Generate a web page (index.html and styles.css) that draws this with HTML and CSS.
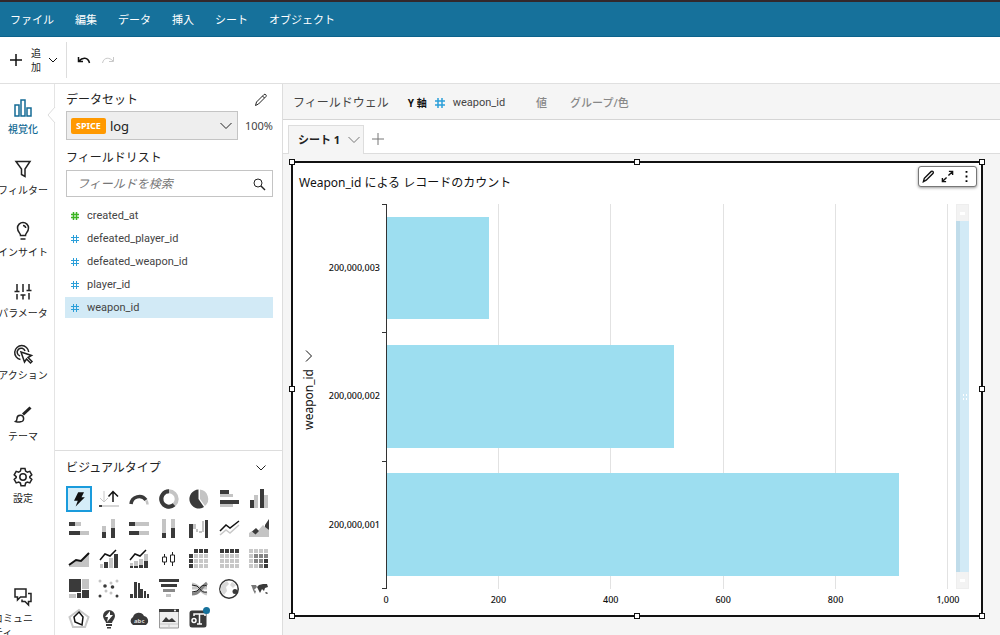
FILE: index.html
```html
<!DOCTYPE html>
<html lang="ja">
<head>
<meta charset="utf-8">
<meta name="viewport" content="width=device-width, initial-scale=1">
<title>分析</title>
<link rel="stylesheet" href="styles.css">
</head>
<body>
<nav class="menubar">
  <button>ファイル</button><button>編集</button><button>データ</button><button>挿入</button><button>シート</button><button>オブジェクト</button>
</nav>

<div class="toolbar">
  <button class="add">
    <svg width="14" height="14" viewBox="0 0 14 14"><path d="M7 1v12M1 7h12" class="k w15"/></svg>
    <span class="add-label">追加</span>
    <svg width="10" height="10" viewBox="0 0 10 10"><path d="M1 3l4 4 4-4" class="k"/></svg>
  </button>
  <button class="tool" aria-label="元に戻す"><svg width="14" height="10" viewBox="0 0 14 10"><path d="M1.500 2v4.500h4.500M2 6C5 2.500 11 1.500 12.500 8" class="k w15"/></svg></button>
  <button class="tool" aria-label="やり直す" disabled><svg width="14" height="10" viewBox="0 0 14 10"><path d="M12.500 2v4.500H8M12 6C9 2.500 3 1.500 1.500 8" class="line pale"/></svg></button>
</div>

<div class="workspace">
  <nav class="rail">
    <div class="rail-main">
      <button class="rail-item active"><svg width="20" height="20" viewBox="0 0 20 20"><path d="M2 7h4v11H2zM8 2h4v16H8zM14 10h4v8h-4z" class="line w15"/></svg><span>視覚化</span></button>
      <button class="rail-item"><svg width="20" height="20" viewBox="0 0 20 20"><path d="M3 2.500h14L12 10v7.500l-3.500-2V10z" class="line w15"/></svg><span>フィルター</span></button>
      <button class="rail-item"><svg width="20" height="20" viewBox="0 0 20 20"><path d="M7.500 14.500C7.500 12 4.500 11 4.500 7a5.500 5.500 0 0 1 11 0c0 4-3 5-3 7.500zM7.500 18h5M10 4.500q2.500.3 2.700 2.500" class="line w15"/></svg><span>インサイト</span></button>
      <button class="rail-item"><svg width="20" height="20" viewBox="0 0 20 20"><path d="M4 2v7M1.500 9.500h5M4 12v5.500M10 2v8M7.500 13h5M10 13v4.500M16 2v6M13.500 8.500h5M16 11v6.500" class="line w15"/></svg><span>パラメータ</span></button>
      <button class="rail-item"><svg width="20" height="20" viewBox="0 0 20 20"><path d="M7.500 15.500A7 7 0 1 1 15.700 8M7 12a4 4 0 1 1 5-5" class="line w15"/><path d="M8 8l10.500 3.500-3.500 2 4 4-1.500 1.500-4-4-2 3z" class="line w15"/></svg><span>アクション</span></button>
      <button class="rail-item"><svg width="20" height="20" viewBox="0 0 20 20"><path d="M17.500 2.500L10 9.500" class="line w3"/><path d="M2.500 16.500q1.500-1 1.500-3a3.300 3.300 0 1 1 3.500 3.300q-2 .7-5-.3z" class="line w15"/></svg><span>テーマ</span></button>
      <button class="rail-item"><svg width="20" height="20" viewBox="0 0 20 20"><path d="M8 1.500h4l.6 2.600 1.700 1 2.500-.8 2 3.500-2 1.800v1l2 1.800-2 3.500-2.500-.8-1.700 1-.6 2.600H8l-.6-2.600-1.700-1-2.500.8-2-3.500 2-1.800v-1l-2-1.800 2-3.500 2.500.8 1.700-1z" class="line w15"/><circle cx="10" cy="10" r="3.200" class="line w15"/></svg><span>設定</span></button>
    </div>
    <button class="rail-item community"><svg width="20" height="20" viewBox="0 0 20 20"><path d="M2 2h11v8H7.500L4.500 13v-3H2zM15 6.500h3v8h-2.500v3.500l-3.500-3.500H9v-2" class="line w15"/></svg><span>コミュニティ</span></button>
  </nav>

  <aside class="panel">
    <svg class="pointer" width="8" height="16" viewBox="0 0 8 16"><path d="M8 0L1 8l7 8" fill="#fff" stroke="#ddd"/></svg>
    <section class="data">
      <div class="heading"><h2>データセット</h2><button aria-label="データセットを編集"><svg width="14" height="14" viewBox="0 0 14 14"><path d="M1.500 12.500l1-3.500 7.500-7.500q1-.6 1.800.2t.2 1.800L4.500 11zM8.500 3l2 2" class="line"/></svg></button></div>
      <div class="dataset-row">
        <button class="dataset"><b>SPICE</b><span>log</span><svg width="14" height="10" viewBox="0 0 14 10"><path d="M1.500 2L7 7.500 12.500 2" class="line"/></svg></button>
        <span class="percent">100%</span>
      </div>
      <h2 class="fields-title"><label for="search">フィールドリスト</label></h2>
      <div class="search"><input id="search" type="text" placeholder="フィールドを検索"><svg width="14" height="14" viewBox="0 0 14 14"><circle cx="6" cy="6" r="4" class="line"/><path d="M9 9l4 4" class="line w15"/></svg></div>
      <ul class="fields">
        <li class="green"><svg width="8" height="8" viewBox="0 0 8 8"><path d="M2.500 0v8M5.500 0v8M0 2.500h8M0 5.500h8" class="line w15"/></svg><span>created_at</span></li>
        <li><svg width="8" height="8" viewBox="0 0 8 8"><path d="M2.500 0v8M5.500 0v8M0 2.500h8M0 5.500h8" class="line"/></svg><span>defeated_player_id</span></li>
        <li><svg width="8" height="8" viewBox="0 0 8 8"><path d="M2.500 0v8M5.500 0v8M0 2.500h8M0 5.500h8" class="line"/></svg><span>defeated_weapon_id</span></li>
        <li><svg width="8" height="8" viewBox="0 0 8 8"><path d="M2.500 0v8M5.500 0v8M0 2.500h8M0 5.500h8" class="line"/></svg><span>player_id</span></li>
        <li class="selected"><svg width="8" height="8" viewBox="0 0 8 8"><path d="M2.500 0v8M5.500 0v8M0 2.500h8M0 5.500h8" class="line"/></svg><span>weapon_id</span></li>
      </ul>
    </section>
    <section class="types">
      <div class="heading"><h2>ビジュアルタイプ</h2><button aria-label="折りたたむ"><svg width="12" height="10" viewBox="0 0 12 10"><path d="M1.500 2.500L6 7l4.500-4.500" class="line"/></svg></button></div>
      <div class="type-grid">
        <button class="chosen" aria-label="自動グラフ"><svg viewBox="0 0 24 24"><path d="M11 4h7l-3 6h4L8 21l2.500-7H6z" fill="#111"/></svg></button>
        <button aria-label="KPI"><svg viewBox="0 0 24 24"><path d="M7 4v11M3 11l4 4 4-4" class="line pale"/><path d="M16 15V5M11.500 9.500L16 4.500l5 5" class="k w15"/><path d="M3 19h19" class="line pale w15"/><path d="M2 19h3" class="k w15"/></svg></button>
        <button aria-label="ゲージ"><svg viewBox="0 0 24 24"><path d="M4 17a8.300 8.300 0 0 1 15-4" fill="none" stroke="#3a3a3a" stroke-width="3.500"/><path d="M19.300 13.500q1 1.500 1.200 4" fill="none" stroke="#c4c4c4" stroke-width="2.500"/></svg></button>
        <button aria-label="ドーナツ"><svg viewBox="0 0 24 24"><circle cx="12" cy="12" r="7.700" fill="none" stroke="#c4c4c4" stroke-width="4"/><path d="M12 4.300a7.700 7.700 0 1 0 5 13.500" fill="none" stroke="#3a3a3a" stroke-width="4"/></svg></button>
        <button aria-label="円"><svg viewBox="0 0 24 24"><path d="M11.500 2.500v9.500l5.500 8A9.500 9.500 0 1 1 11.500 2.500z" class="ink"/><path d="M13 2.500a9.500 9.500 0 0 1 5 16.500L13 12z" class="gray"/></svg></button>
        <button aria-label="横棒"><svg viewBox="0 0 24 24"><path d="M3 3h9v4H3zM3 13h19v4H3z" class="ink"/><path d="M3 7h13v3H3zM3 17h13v3H3z" class="gray"/></svg></button>
        <button aria-label="縦棒"><svg viewBox="0 0 24 24"><path d="M3 13h4v8H3zM13 2h4v19h-4z" class="ink"/><path d="M7 8h4v13H7zM17 8h4v13h-4z" class="gray"/></svg></button>

        <button aria-label="積み上げ横棒"><svg viewBox="0 0 24 24"><path d="M2 5h6v4H2zM2 14h11v4H2z" class="ink"/><path d="M8 5h6v4H8zM13 14h9v4h-9z" class="gray"/></svg></button>
        <button aria-label="積み上げ縦棒"><svg viewBox="0 0 24 24"><path d="M5 15h4v6H5zM14 11h4v10h-4z" class="ink"/><path d="M5 9h4v6H5zM14 2h4v9h-4z" class="gray"/></svg></button>
        <button aria-label="100%積み上げ横棒"><svg viewBox="0 0 24 24"><path d="M2 5h6v4H2zM2 14h10v4H2z" class="ink"/><path d="M8 5h14v4H8zM12 14h10v4H12z" class="gray"/></svg></button>
        <button aria-label="100%積み上げ縦棒"><svg viewBox="0 0 24 24"><path d="M5 16h4v5H5zM14 11h4v10h-4z" class="ink"/><path d="M5 2h4v14H5zM14 2h4v9h-4z" class="gray"/></svg></button>
        <button aria-label="ウォーターフォール"><svg viewBox="0 0 24 24"><path d="M2 7h4v14H2zM18 3h3v18h-3z" class="ink"/><path d="M6 7h3v5H6zM9 12h2v3H9zM12 14h3v2h-3zM15 4h2v11h-2z" class="gray"/></svg></button>
        <button aria-label="折れ線"><svg viewBox="0 0 24 24"><path d="M3 18l6-5 4 3 9-8" class="line pale w15"/><path d="M3 14l6-6 4 3 9-7" class="k w15"/></svg></button>
        <button aria-label="面"><svg viewBox="0 0 24 24"><path d="M2 20v-4l3-2 4 2 7-8 6 5v7z" class="gray"/><path d="M5 14.500l4-3.500 3 3-3.500 3.500zM18 8l4-6v11l-4-3z" class="ink"/></svg></button>

        <button aria-label="積み上げ面"><svg viewBox="0 0 24 24"><path d="M2 20v-2l7-5 5 1 8-8v14z" class="gray"/><path d="M2 18l7-5 5 1 8-8" class="k w2"/></svg></button>
        <button aria-label="複合"><svg viewBox="0 0 24 24"><path d="M7 15h4v6H7zM17 7h4v14h-4z" class="ink"/><path d="M3 17h3v4H3zM12 11h4v10h-4z" class="gray"/><path d="M3 13l5-6 5 2 6-6" class="k w15"/></svg></button>
        <button aria-label="積み上げ複合"><svg viewBox="0 0 24 24"><path d="M3 16h3v3H3zM7 14h4v5H7zM12 12h4v6h-4zM17 7h4v8h-4z" class="gray"/><path d="M3 19h3v2H3zM7 19h4v2H7zM12 18h4v3h-4zM17 14h4v7h-4z" class="ink"/><path d="M3 13l5-6 5 2 6-6" class="k w15"/></svg></button>
        <button aria-label="箱ひげ"><svg viewBox="0 0 24 24"><path d="M7.500 7v3M5.500 10h4v5h-4zM7.500 15v3M15.500 5v3M13.500 8h4v7h-4zM15.500 15v4" class="line"/></svg></button>
        <button aria-label="ピボット"><svg viewBox="0 0 24 24"><path d="M7 4h14M4 7v14" class="dots"/><path d="M7 9h14M7 14h14M7 19h14" class="dots light"/></svg></button>
        <button aria-label="表"><svg viewBox="0 0 24 24"><path d="M3 4h19" class="dots"/><path d="M3 9h19M3 14h19M3 19h19" class="dots light"/></svg></button>
        <button aria-label="ヒートマップ"><svg viewBox="0 0 24 24"><path d="M2 4h19M2 9h19M2 14h19M2 19h19" class="dots light"/><path d="M7 9h14M7 14h14M12 19h9" class="dots mid"/><path d="M17 14h4M17 19h4" class="dots"/></svg></button>

        <button aria-label="ツリーマップ"><svg viewBox="0 0 24 24"><path d="M2 2h12v13H2zM10 16h4v5h-4zM15 13h7v8h-7z" class="ink"/><path d="M15 2h7v10h-7zM2 17h7v4H2z" class="gray"/></svg></button>
        <button aria-label="散布図"><svg viewBox="0 0 24 24"><g class="ink"><circle cx="3" cy="19" r="1.500"/><circle cx="8" cy="9" r="1.800"/><circle cx="15.500" cy="10" r="1.800"/><circle cx="20" cy="19" r="1.500"/></g><g class="gray"><circle cx="3" cy="4" r="1.500"/><circle cx="14" cy="6" r="1.500"/><circle cx="20" cy="4" r="1.500"/><circle cx="9" cy="14" r="1.500"/><circle cx="14" cy="16" r="1.500"/></g></svg></button>
        <button aria-label="ヒストグラム"><svg viewBox="0 0 24 24"><path d="M3 17h3v4H3zM7 5h3v16H7zM11 6h2v15h-2zM13 12h3v9h-3zM17 14h2v7h-2zM20 17h2v4h-2z" class="ink"/></svg></button>
        <button aria-label="ファネル"><svg viewBox="0 0 24 24"><path d="M2 2h20v3H2zM4 7h16v3H4z" class="ink"/><path d="M6 12h12v3H6z" fill="#8a8a8a"/><path d="M9 17h5v3H9z" class="gray"/></svg></button>
        <button aria-label="サンキー"><svg viewBox="0 0 24 24"><path d="M5 7q5 1 8 5t7 5M5 11h15" fill="none" stroke="#c4c4c4" stroke-width="3"/><path d="M5 17q5 0 8-4t7-7" fill="none" stroke="#858585" stroke-width="3"/><path d="M5 8q6 0 8 4t7 3M5 15q6 0 8-4t7-2" class="line"/></svg></button>
        <button aria-label="ポイントマップ"><svg viewBox="0 0 24 24"><circle cx="12" cy="12" r="9.200" fill="#fff" stroke="#333" stroke-width="1.500"/><path d="M5 7l5-3 2 3-3 3 1 4-3 4-4-5zM15 5l4 3-3 3-3-3z" fill="#d8d8d8"/><circle cx="18" cy="14.500" r="2.500" class="ink"/></svg></button>
        <button aria-label="塗り分けマップ"><svg viewBox="0 0 24 24"><path d="M4 8h5l1 2-3 3 2 1-1 3-2-4-1-3z" fill="#777"/><path d="M12 8l4-1h4l1 3-3 1-1 3-2-2-2 4-2-4-1-2zM19 15l2 1-1 1-2-1z" class="ink"/></svg></button>

        <button aria-label="レーダー"><svg viewBox="0 0 24 24"><path d="M12 3l9.500 7-3.500 10H6L2.500 10z" class="line pale w2"/><path d="M12 5l4 5-1 8-7-3-1-5z" class="k w15"/></svg></button>
        <button aria-label="インサイト"><svg viewBox="0 0 24 24"><path d="M9 16c0-2-3-4-3-7a6 6 0 0 1 12 0c0 3-3 5-3 7zM9 17h6v2H9zM10 20h4v1.500h-4z" class="ink"/><path d="M13 4l-5 6h3l-1 5 6-7h-3z" fill="#fff"/></svg></button>
        <button aria-label="ワードクラウド"><svg viewBox="0 0 24 24"><path d="M6 18a4.500 4.500 0 0 1 0-8 6 6 0 0 1 11-1 5 5 0 0 1 2 9z" class="ink"/><text x="7" y="16" class="abc">abc</text></svg></button>
        <button aria-label="カスタムコンテンツ"><svg viewBox="0 0 24 24"><path d="M2.500 3h19v18h-19z" fill="#eee" stroke="#999"/><path d="M2 2h20v3H2z" class="ink"/><path d="M5 15l4-5 3 3 3-2 4 4z" class="ink"/><path d="M3 17h18M12 17v4" class="line pale"/><circle cx="18" cy="3.500" r="1" fill="#fff"/></svg></button>
        <button class="fresh" aria-label="テキストボックス"><svg viewBox="0 0 24 24"><rect x="2.500" y="3.500" width="17" height="17" rx="2.500" class="ink"/><path d="M7 9V7h11v2M12.500 7v10M10 17h5" fill="none" stroke="#fff" stroke-width="1.500"/><circle cx="7" cy="13.500" r="2" fill="none" stroke="#fff" stroke-width="1.500"/></svg></button>
      </div>
    </section>
  </aside>

  <main class="content">
    <div class="wells">
      <h2>フィールドウェル</h2>
      <div class="axis-well"><b>Y 軸</b><svg width="10" height="10" viewBox="0 0 10 10"><path d="M3 0v10M7 0v10M0 3h10M0 7h10" class="line w15"/></svg><span>weapon_id</span></div>
      <span class="empty">値</span><span class="empty">グループ/色</span>
    </div>
    <div class="tabs">
      <button class="tab">シート 1<svg width="14" height="10" viewBox="0 0 14 10"><path d="M1.500 2L7 7.500 12.500 2" class="line"/></svg></button>
      <button class="new-tab" aria-label="シートを追加"><svg width="14" height="14" viewBox="0 0 14 14"><path d="M7 1v12M1 7h12" class="line"/></svg></button>
    </div>
    <div class="sheet">
      <article class="visual">
        <i class="handle n w"></i><i class="handle n c"></i><i class="handle n e"></i><i class="handle m w"></i><i class="handle m e"></i><i class="handle s w"></i><i class="handle s c"></i><i class="handle s e"></i>
        <div class="visual-tools">
          <button aria-label="編集"><svg width="14" height="14" viewBox="0 0 14 14"><path d="M1.500 12.500l1-3.500 7.500-7.500q1-.6 1.800.2t.2 1.800L4.500 11z" class="k w15"/></svg></button>
          <button aria-label="最大化"><svg width="14" height="14" viewBox="0 0 14 14"><path d="M8.500 1.500h4v4M12.500 1.500L8 6M5.500 12.500h-4v-4M1.500 12.500L6 8" class="k w15"/></svg></button>
          <button aria-label="メニュー"><svg width="14" height="14" viewBox="0 0 14 14"><path d="M6 1h2v2H6zM6 6h2v2H6zM6 11h2v2H6z"/></svg></button>
        </div>
        <h1>Weapon_id による レコードのカウント</h1>
        <div class="chart">
          <div class="axis-title"><svg width="10" height="14" viewBox="0 0 10 14"><path d="M2 1.500L7.500 7 2 12.500" class="line"/></svg><span>weapon_id</span></div>
          <div class="categories"><span>200,000,003</span><span>200,000,002</span><span>200,000,001</span></div>
          <div class="plot">
            <div class="band"><div class="bar" style="width:18.2%"></div></div>
            <div class="band"><div class="bar" style="width:51.2%"></div></div>
            <div class="band"><div class="bar" style="width:91.3%"></div></div>
          </div>
          <div class="scroller">
            <div class="cap"><svg width="5" height="3" viewBox="0 0 5 3"><path d="M0 0h5v3H0z" fill="#fff"/></svg></div>
            <div class="thumb"><svg width="4" height="6" viewBox="0 0 4 6"><path d="M0 0h1v2H0zM3 0h1v2H3zM0 4h1v2H0zM3 4h1v2H3z" fill="#fff"/></svg></div>
            <div class="cap"><svg width="5" height="3" viewBox="0 0 5 3"><path d="M0 0h5v3H0z" fill="#fff"/></svg></div>
          </div>
          <div class="values"><span>0</span><span>200</span><span>400</span><span>600</span><span>800</span><span>1,000</span></div>
        </div>
      </article>
    </div>
  </main>
</div>
</body>
</html>
```
FILE: styles.css
```css
* { box-sizing: border-box; }
body {
  margin: 0;
  height: 100vh;
  display: flex;
  flex-direction: column;
  overflow: hidden;
  background: #fff;
  color: #222;
  font: 12px/16px "Noto Sans", "Noto Sans CJK JP", sans-serif;
}
button { padding: 0; border: 0; background: none; color: inherit; font: inherit; }
h1, h2 { margin: 0; font-size: 12px; font-weight: 400; }
svg { display: block; flex: none; overflow: visible; }
.line, .k { fill: none; stroke: currentColor; stroke-width: 1; }
.k { stroke: #111; }
.w15 { stroke-width: 1.5; }
.w2 { stroke-width: 2; }
.w3 { stroke-width: 3; }
.pale { stroke: #c8c8c8; }
.ink { fill: #3a3a3a; }
.gray { fill: #c4c4c4; }
.dots { fill: none; stroke: #3a3a3a; stroke-width: 4; stroke-dasharray: 4 1; }
.dots.light { stroke: #c8c8c8; }
.dots.mid { stroke: #858585; }
.abc { font: 700 6px "Noto Sans", sans-serif; fill: #ddd; }

.menubar {
  flex: none;
  display: flex;
  align-items: center;
  gap: 21px;
  height: 37px;
  padding: 2px 0 0 10px;
  border-top: 2px solid #33282c;
  border-bottom: 1px solid #0c628b;
  background: #16719b;
  color: #fff;
  font-size: 11px;
}
.toolbar {
  flex: none;
  display: flex;
  align-items: center;
  gap: 10px;
  height: 47px;
  border-bottom: 1px solid #e0e0e0;
}
.add {
  display: flex;
  align-items: center;
  gap: 5px;
  height: 36px;
  padding: 0 8px 0 9px;
  border-right: 1px solid #ddd;
}
.add-label { width: 14px; margin-left: 1px; font-size: 10px; line-height: 14px; }
.workspace { flex: 1; min-height: 0; display: flex; }

.rail {
  flex: none;
  display: flex;
  flex-direction: column;
  justify-content: space-between;
  width: 55px;
  padding: 14px 8px 0 0;
  border-right: 1px solid #e4e4e4;
  overflow: hidden;
}
.rail-main { display: grid; grid-template-columns: 100%; grid-auto-rows: 1fr; height: 430px; }
.rail-item {
  display: flex;
  flex-direction: column;
  align-items: center;
  gap: 3px;
  font-size: 10px;
  line-height: 16px;
  white-space: nowrap;
}
.rail-item.active { color: #146b95; font-weight: 500; }
.rail-item.community { justify-content: flex-start; gap: 4px; height: 48px; line-height: 14px; }
.community span { width: 60px; padding-right: 18px; text-align: left; white-space: normal; }

.panel {
  position: relative;
  flex: none;
  display: flex;
  flex-direction: column;
  width: 228px;
  border-right: 1px solid #ddd;
}
.pointer { position: absolute; top: 23px; left: -8px; }
.data { flex: 1; padding: 8px 9px 0 11px; }
.heading { display: flex; justify-content: space-between; align-items: center; padding-right: 5px; }
.dataset-row { display: flex; align-items: center; gap: 7px; margin-top: 3px; }
.dataset {
  flex: 1;
  display: flex;
  align-items: center;
  gap: 4px;
  height: 29px;
  padding: 0 4px;
  border: 1px solid #c4c4c4;
  background: #eee;
}
.dataset b { padding: 0 5px; border-radius: 2px; background: #ff9900; color: #fff; font-size: 9px; }
.dataset span { flex: 1; text-align: left; font-size: 13px; }
.percent { font-size: 11px; color: #444; }
.fields-title { margin: 10px 0 4px; }
.search {
  display: flex;
  align-items: center;
  height: 27px;
  padding: 0 6px 0 10px;
  border: 1px solid #c4c4c4;
}
.search input { flex: 1; min-width: 0; padding: 0; border: 0; outline: 0; font: inherit; }
.search input::placeholder { color: #777; font-style: italic; }
.fields {
  display: grid;
  gap: 2px;
  margin: 8px 0 0 -1px;
  padding: 0;
  list-style: none;
  color: #444;
  font: 11px/16px Roboto, sans-serif;
}
.fields li { display: flex; align-items: center; gap: 8px; height: 21px; padding-left: 6px; }
.fields svg { color: #2b9fd9; }
.fields .green svg { color: #3bb422; }
.fields .selected { background: #d2eaf6; }

.types { padding: 9px 7px 1px 9px; border-top: 1px solid #ddd; }
.types .heading { padding: 0 8px 0 2px; }
.type-grid { display: grid; grid-template-columns: repeat(7, 30px); grid-auto-rows: 30px; margin-top: 8px; }
.type-grid button { position: relative; display: grid; place-items: center; }
.type-grid svg { width: 24px; height: 24px; }
.type-grid .chosen { margin: 2px; border: 2px solid #1a9bdc; background: #d5edf8; }
.type-grid .chosen svg { width: 20px; height: 20px; }
.fresh::after {
  content: "";
  position: absolute;
  top: 3px;
  right: 4px;
  width: 7px;
  height: 7px;
  border-radius: 50%;
  background: #16719b;
}

.content { flex: 1; min-width: 0; display: flex; flex-direction: column; background: #f5f5f5; }
.wells {
  flex: none;
  display: flex;
  align-items: center;
  height: 36px;
  padding: 2px 0 0 10px;
  border-bottom: 1px solid #d5d5d5;
  color: #444;
}
.axis-well { display: flex; align-items: center; gap: 8px; margin: 0 31px 0 19px; font: 11px/16px Roboto, sans-serif; }
.axis-well b { color: #111; font: 700 10px/16px "Noto Sans", "Noto Sans CJK JP", sans-serif; }
.axis-well svg { color: #2b9fd9; }
.empty { margin-right: 23px; color: #888; font-size: 11px; font-weight: 500; }
.tabs {
  flex: none;
  display: flex;
  align-items: flex-end;
  gap: 7px;
  height: 34px;
  padding-left: 5px;
  border-bottom: 1px solid #ddd;
  background: #fff;
}
.tab {
  display: flex;
  align-items: center;
  gap: 7px;
  height: 29px;
  margin-bottom: -1px;
  padding: 0 2px 0 9px;
  border: 1px solid #ddd;
  border-bottom: 0;
  background: #f5f5f5;
  font-size: 11px;
  font-weight: 700;
}
.tab svg, .new-tab { color: #777; }
.new-tab { height: 28px; }
.sheet { flex: 1; display: flex; padding: 7px 17px 18px 8px; }
.visual {
  position: relative;
  flex: 1;
  min-width: 0;
  display: flex;
  flex-direction: column;
  padding: 12px 12px 8px 6px;
  border: 2px solid #111;
  background: #fff;
  color: #111;
}
.handle { position: absolute; width: 6px; height: 6px; border: 1px solid #111; background: #fff; }
.n { top: -4px; }
.m { top: calc(50% - 3px); }
.s { bottom: -4px; }
.w { left: -4px; }
.c { left: calc(50% - 3px); }
.e { right: -4px; }
.visual-tools {
  position: absolute;
  top: 3px;
  right: 4px;
  display: flex;
  align-items: center;
  gap: 6px;
  height: 21px;
  padding: 0 3px;
  border: 1px solid #777;
  border-radius: 3px;
  background: #fff;
  box-shadow: 0 1px 3px #999;
}
.visual-tools svg { width: 13px; height: 13px; }
.chart {
  flex: 1;
  display: grid;
  grid-template-columns: 20px 62px 1fr 13px;
  grid-template-rows: 1fr 18px;
  column-gap: 5px;
  margin-top: 13px;
}
.axis-title {
  display: flex;
  flex-direction: column;
  align-items: center;
  justify-content: center;
  gap: 6px;
  padding-bottom: 14px;
}
.axis-title span { writing-mode: vertical-rl; transform: rotate(180deg); }
.categories {
  display: grid;
  grid-auto-rows: 1fr;
  align-items: center;
  justify-items: end;
  padding-right: 6px;
  font-size: 9px;
  font-weight: 500;
}
.categories span { line-height: 12px; }
.plot {
  display: grid;
  grid-auto-rows: 1fr;
  margin-left: -5px;
  margin-right: 3px;
  border-left: 1px solid #333;
  background: repeating-linear-gradient(to right, transparent 0, transparent calc(20% - 1px), #e2e2e2 calc(20% - 1px), #e2e2e2 20%);
}
.band { position: relative; display: flex; align-items: center; }
.band::before, .band:last-child::after { content: ""; position: absolute; left: -5px; top: 0; width: 5px; height: 1px; background: #333; }
.band:last-child::after { top: auto; bottom: 0; }
.bar { height: 80%; background: #9ddef0; }
.scroller { display: flex; flex-direction: column; background: #f3f3f3; border: 1px solid #eee; }
.cap, .thumb { display: grid; place-items: center; }
.cap { height: 16px; }
.thumb { flex: 1; margin: 0 -1px; border-left: 4px solid #c0dcea; background: #d2eaf6; }
.values {
  grid-column: 3;
  display: flex;
  justify-content: space-between;
  align-items: flex-end;
  margin: 0 3px 0 -5px;
  font-size: 9px;
  font-weight: 500;
  line-height: 14px;
}
.values span { width: 0; display: flex; justify-content: center; }
```
